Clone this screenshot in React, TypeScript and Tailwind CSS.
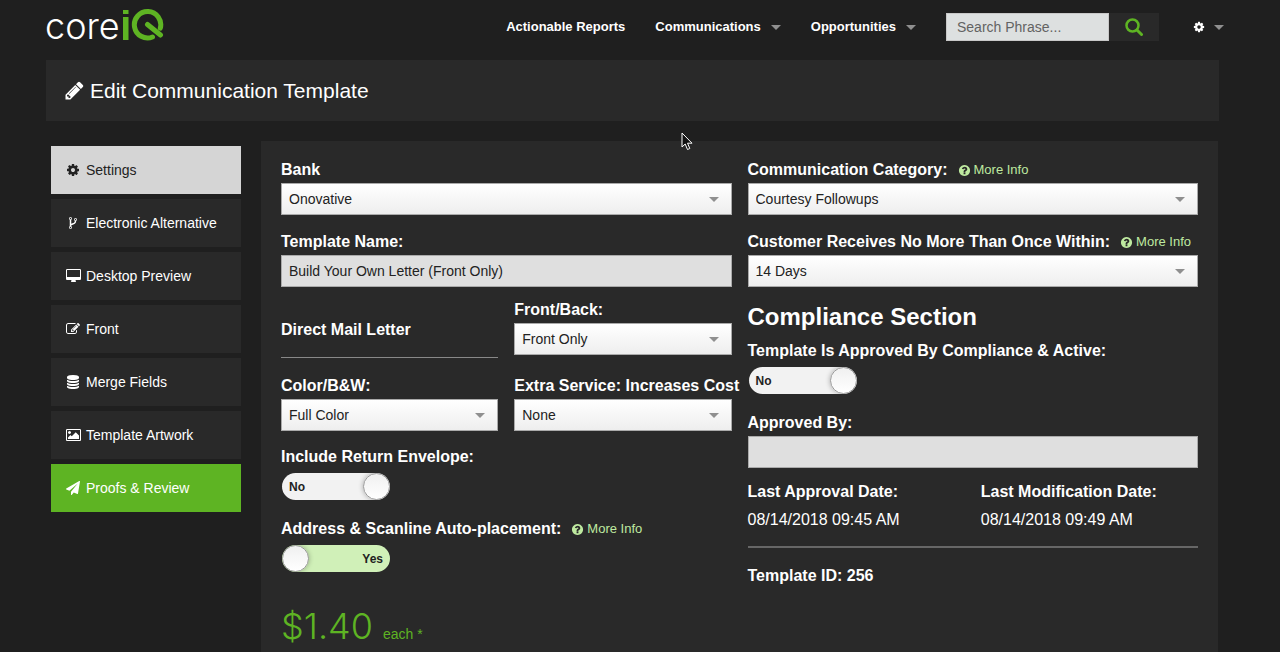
import { useId, useState, type ReactNode } from "react";
import { clsx } from "clsx";

const ICONS = {
  pencil: {
    width: 1792,
    d: "M491 1536l91-91-235-235-91 91v107h128v128h107zm523-928q0-22-22-22-10 0-17 7l-542 542q-7 7-7 17 0 22 22 22 10 0 17-7l542-542q7-7 7-17zm-54-192l416 416-832 832h-416v-416zm683 96q0 53-37 90l-166 166-416-416 166-165q36-38 90-38 53 0 91 38l235 234q37 39 37 91z",
  },
  cog: {
    width: 1792,
    d: "M1152 896q0-106-75-181t-181-75-181 75-75 181 75 181 181 75 181-75 75-181zm512-109v222q0 12-8 23t-20 13l-185 28q-19 54-39 91 35 50 107 138 10 12 10 25t-9 23q-27 37-99 108t-94 71q-12 0-26-9l-138-108q-44 23-91 38-16 136-29 186-7 28-36 28h-222q-14 0-24.5-8.500t-11.500-21.500l-28-184q-49-16-90-37l-141 107q-10 9-25 9-14 0-25-11-126-114-165-168-7-10-7-23 0-12 8-23 15-21 51-66.500t54-70.500q-27-50-41-99l-183-27q-13-2-21-12.500t-8-23.500v-222q0-12 8-23t19-13l186-28q14-46 39-92-40-57-107-138-10-12-10-24 0-10 9-23 26-36 98.500-107.500t94.500-71.500q13 0 26 10l138 107q44-23 91-38 16-136 29-186 7-28 36-28h222q14 0 24.500 8.500t11.500 21.500l28 184q49 16 90 37l142-107q9-9 24-9 13 0 25 10 129 119 165 170 7 8 7 22 0 12-8 23-15 21-51 66.500t-54 70.500q26 50 41 98l183 28q13 2 21 12.500t8 23.500z",
  },
  fork: {
    width: 1792,
    d: "M672 1472q0-40-28-68t-68-28-68 28-28 68 28 68 68 28 68-28 28-68zm0-1152q0-40-28-68t-68-28-68 28-28 68 28 68 68 28 68-28 28-68zm640 128q0-40-28-68t-68-28-68 28-28 68 28 68 68 28 68-28 28-68zm96 0q0 52-26 96.500t-70 69.500q-2 287-226 414-67 38-203 81-128 40-169.500 71t-41.500 100v26q44 25 70 69.500t26 96.500q0 80-56 136t-136 56-136-56-56-136q0-52 26-96.500t70-69.500v-820q-44-25-70-69.500t-26-96.500q0-80 56-136t136-56 136 56 56 136q0 52-26 96.500t-70 69.500v497q54-26 154-57 55-17 87.500-29.500t70.500-31 59-39.500 40.500-51 28-69.500 8.500-91.500q-44-25-70-69.500t-26-96.500q0-80 56-136t136-56 136 56 56 136z",
  },
  desktop: {
    width: 1920,
    d: "M1792 992v-832q0-13-9.500-22.500t-22.500-9.500h-1600q-13 0-22.500 9.500t-9.500 22.500v832q0 13 9.500 22.500t22.500 9.500h1600q13 0 22.500-9.500t9.500-22.500zm128-832v1088q0 66-47 113t-113 47h-544q0 37 16 77.500t32 71 16 43.500q0 26-19 45t-45 19h-512q-26 0-45-19t-19-45q0-14 16-44t32-70 16-78h-544q-66 0-113-47t-47-113v-1088q0-66 47-113t113-47h1600q66 0 113 47t47 113z",
  },
  edit: {
    width: 1792,
    d: "M888 1184l116-116-152-152-116 116v56h96v96h56zm440-720q-16-16-33 1l-350 350q-17 17-1 33t33-1l350-350q17-17 1-33zm80 594v190q0 119-84.500 203.500t-203.500 84.500h-832q-119 0-203.500-84.500t-84.500-203.500v-832q0-119 84.500-203.500t203.500-84.500h832q63 0 117 25 15 7 18 23 3 17-9 29l-49 49q-14 14-32 8-23-6-45-6h-832q-66 0-113 47t-47 113v832q0 66 47 113t113 47h832q66 0 113-47t47-113v-126q0-13 9-22l64-64q15-15 35-7t20 29zm-96-738l288 288-672 672h-288v-288zm444 132l-92 92-288-288 92-92q28-28 68-28t68 28l152 152q28 28 28 68t-28 68z",
  },
  database: {
    width: 1792,
    d: "M896 768q237 0 443-43t325-127v170q0 69-103 128t-280 93.500-385 34.500-385-34.500-280-93.500-103-128v-170q119 84 325 127t443 43zm0 768q237 0 443-43t325-127v170q0 69-103 128t-280 93.500-385 34.500-385-34.500-280-93.500-103-128v-170q119 84 325 127t443 43zm0-384q237 0 443-43t325-127v170q0 69-103 128t-280 93.500-385 34.500-385-34.500-280-93.500-103-128v-170q119 84 325 127t443 43zm0-1152q208 0 385 34.500t280 93.500 103 128v128q0 69-103 128t-280 93.500-385 34.500-385-34.500-280-93.500-103-128v-128q0-69 103-128t280-93.500 385-34.500z",
  },
  image: {
    width: 1920,
    d: "M640 576q0 80-56 136t-136 56-136-56-56-136 56-136 136-56 136 56 56 136zm1024 384v448h-1408v-192l320-320 160 160 512-512zm96-704h-1600q-13 0-22.500 9.500t-9.500 22.500v1216q0 13 9.500 22.500t22.500 9.500h1600q13 0 22.500-9.500t9.500-22.500v-1216q0-13-9.500-22.500t-22.500-9.500zm160 32v1216q0 66-47 113t-113 47h-1600q-66 0-113-47t-47-113v-1216q0-66 47-113t113-47h1600q66 0 113 47t47 113z",
  },
  plane: {
    width: 1792,
    d: "M1764 11q33 24 27 64l-256 1536q-5 29-32 45-14 8-31 8-11 0-24-5l-453-185-242 295q-18 23-49 23-13 0-22-4-19-7-30.500-23.500t-11.500-36.500v-349l864-1059-1069 925-395-162q-37-14-40-55-2-40 32-59l1664-960q15-9 32-9 20 0 36 11z",
  },
  question: {
    width: 1792,
    d: "M1024 1376v-192q0-14-9-23t-23-9h-192q-14 0-23 9t-9 23v192q0 14 9 23t23 9h192q14 0 23-9t9-23zm256-672q0-88-55.500-163t-138.500-116-170-41q-243 0-371 213-15 24 8 42l132 100q7 6 19 6 16 0 25-12 53-68 86-92 34-24 86-24 48 0 85.500 26t37.500 59q0 38-20 61t-68 45q-63 28-115.500 86.500t-52.500 125.500v36q0 14 9 23t23 9h192q14 0 23-9t9-23q0-19 21.500-49.500t54.500-49.500q32-18 49-28.500t46-35 44.500-48 28-60.500 12.500-81zm384 192q0 209-103 385.500t-279.500 279.500-385.500 103-385.500-103-279.500-279.500-103-385.500 103-385.500 279.500-279.500 385.500-103 385.500 103 279.500 279.500 103 385.500z",
  },
};

type IconName = keyof typeof ICONS;

function Icon({ name, className }: { name: IconName; className?: string }) {
  const { width, d } = ICONS[name];
  return (
    <svg viewBox={`0 0 ${width} 1792`} className={clsx("shrink-0 fill-current", className)} aria-hidden="true">
      <path d={d} />
    </svg>
  );
}

function Caret({ className }: { className?: string }) {
  return (
    <svg viewBox="0 0 10 5" className={clsx("h-[5px] w-[10px] shrink-0 fill-[#8f8f8f]", className)} aria-hidden="true">
      <path d="M0 0h10L5 5z" />
    </svg>
  );
}

function Logo() {
  return (
    <a href="#" aria-label="core iQ" className="flex h-11 items-start text-white">
      <span className="w-[73px] font-['Inter',sans-serif] text-4xl leading-[52px] font-light">core</span>
      <svg viewBox="0 0 42 34" className="mt-2 ml-1 h-[34px] w-[42px]" aria-hidden="true">
        <path d="M1 2h5.500v4H1zM1 9h5.500v23H1z" fill="#5eb423" />
        <path
          d="M38.300 20.200A13.200 13.200 0 1 0 30.500 29M25.500 16.500L38.500 27"
          fill="none"
          stroke="#5eb423"
          strokeWidth="5"
          strokeLinecap="round"
        />
      </svg>
    </a>
  );
}

function Header() {
  return (
    <header className="flex h-[60px] items-start justify-between pr-[56px] pl-[45px]">
      <Logo />
      <div className="flex h-[54px] items-center">
        <nav className="flex items-center gap-[30px] text-[13px] font-bold text-white">
          <a href="#">Actionable Reports</a>
          <a href="#" className="flex items-center gap-[10px]">
            Communications
            <Caret />
          </a>
          <a href="#" className="flex items-center gap-[10px]">
            Opportunities
            <Caret />
          </a>
        </nav>
        <form className="ml-[30px] flex h-[28px]" onSubmit={(e) => e.preventDefault()}>
          <input
            type="search"
            aria-label="Search"
            placeholder="Search Phrase..."
            className="w-[163px] border border-[#c8c8c8] bg-[#dde0e0] px-[10px] text-sm text-[#222] placeholder:text-[#636363]"
          />
          <button type="submit" aria-label="Submit search" className="flex w-[50px] items-center justify-center bg-[#292929]">
            <svg viewBox="0 0 18 18" className="size-[18px]" fill="none" stroke="#5eb423" aria-hidden="true">
              <circle cx="7.500" cy="7.500" r="6" strokeWidth="2.500" />
              <path d="M12 12l4.500 4.500" strokeWidth="3" strokeLinecap="round" />
            </svg>
          </button>
        </form>
        <button type="button" aria-label="Preferences" className="ml-[34px] flex items-center gap-[9px] text-white">
          <Icon name="cog" className="size-3" />
          <Caret />
        </button>
      </div>
    </header>
  );
}

const TABS: { icon: IconName; label: string }[] = [
  { icon: "cog", label: "Settings" },
  { icon: "fork", label: "Electronic Alternative" },
  { icon: "desktop", label: "Desktop Preview" },
  { icon: "edit", label: "Front" },
  { icon: "database", label: "Merge Fields" },
  { icon: "image", label: "Template Artwork" },
  { icon: "plane", label: "Proofs & Review" },
];

function Sidebar() {
  return (
    <nav className="flex w-[190px] shrink-0 flex-col gap-[5px] pt-[5px]">
      {TABS.map((tab, i) => (
        <a
          key={tab.label}
          href="#"
          aria-current={i === 0 ? "page" : undefined}
          className={clsx(
            "flex h-[48px] items-center gap-[5px] pl-[14px] text-sm",
            i === 0 && "bg-[#d5d5d5] text-[#222]",
            i > 0 && i < TABS.length - 1 && "bg-[#292929] text-white",
            i === TABS.length - 1 && "bg-[#5eb423] text-white"
          )}
        >
          <span className="flex w-4 justify-center">
            <Icon name={tab.icon} className="h-[14px]" />
          </span>
          {tab.label}
        </a>
      ))}
    </nav>
  );
}

function MoreInfo() {
  return (
    <a href="#" className="ml-[10px] flex items-center gap-[3px] text-[13px] whitespace-nowrap text-[#bfeaa0]">
      <Icon name="question" className="size-[13px]" />
      More Info
    </a>
  );
}

interface FieldProps {
  label: string;
  info?: boolean;
  className?: string;
  children: (id: string) => ReactNode;
}

function Field({ label, info, className, children }: FieldProps) {
  const id = useId();
  return (
    <div className={className}>
      <div className="flex h-[26px] items-center">
        <label htmlFor={id} className="text-base font-bold whitespace-nowrap">
          {label}
        </label>
        {info && <MoreInfo />}
      </div>
      {children(id)}
    </div>
  );
}

function SelectField({ value, ...field }: { value: string } & Omit<FieldProps, "children">) {
  return (
    <Field {...field}>
      {(id) => (
        <div className="relative">
          <select
            id={id}
            className="h-8 w-full appearance-none border border-[#aaa] bg-linear-to-b from-white to-[#eee] pr-8 pl-[7px] text-sm text-[#222]"
          >
            <option>{value}</option>
          </select>
          <Caret className="pointer-events-none absolute top-[14px] right-[13px]" />
        </div>
      )}
    </Field>
  );
}

function TextField({ value, ...field }: { value: string } & Omit<FieldProps, "children">) {
  return (
    <Field {...field}>
      {(id) => (
        <input
          id={id}
          type="text"
          defaultValue={value}
          className="block h-8 w-full border border-[#aaa] bg-[#dfdfdf] px-[7px] text-sm text-[#222]"
        />
      )}
    </Field>
  );
}

function ToggleField({ on, ...field }: { on: boolean } & Omit<FieldProps, "children">) {
  const [checked, setChecked] = useState(on);
  return (
    <Field {...field}>
      {(id) => (
        <div className="pt-[3px] pl-px">
          <input
            id={id}
            type="checkbox"
            role="switch"
            className="peer sr-only"
            checked={checked}
            onChange={(e) => setChecked(e.target.checked)}
          />
          <label
            htmlFor={id}
            className={clsx(
              "flex h-[27px] w-[108px] items-center justify-between overflow-hidden rounded-full text-xs font-bold text-[#222] peer-focus-visible:outline-2",
              checked ? "flex-row-reverse bg-[#d0f0b8] pr-[7px]" : "bg-[#f2f2f2] pl-[7px]"
            )}
          >
            {checked ? "Yes" : "No"}
            <span className="size-[27px] rounded-full border border-[#999] bg-linear-to-b from-[#f0f0f0] to-white shadow-[0_0_5px_rgba(0,0,0,0.3)]" />
          </label>
        </div>
      )}
    </Field>
  );
}

function DateStamp({ label, value }: { label: string; value: string }) {
  return (
    <div className="leading-7">
      <dt className="font-bold">{label}</dt>
      <dd>{value}</dd>
    </div>
  );
}

function Pointer() {
  return (
    <svg viewBox="0 0 12 19" className="pointer-events-none absolute top-[132px] left-[681px] h-[19px] w-[12px]" aria-hidden="true">
      <path d="M1 1v14l3.200-3 2.300 5.500 2.300-1-2.300-5.300H11z" fill="#111" stroke="#fff" strokeWidth="1" />
    </svg>
  );
}

export default function App() {
  return (
    <div className="relative flex min-h-screen flex-col bg-[#1f1f1f] font-['Liberation_Sans',Arial,sans-serif] text-white">
      <Header />
      <div className="flex flex-1 flex-col pr-[61px] pl-[46px]">
        <h1 className="flex h-[61px] items-center gap-[5px] bg-[#292929] pl-[18px] text-[21px]">
          <Icon name="pencil" className="size-[21px]" />
          Edit Communication Template
        </h1>
        <div className="mt-5 flex flex-1 gap-5 pr-px pl-[5px]">
          <Sidebar />
          <main className="grid flex-1 grid-cols-2 gap-4 bg-[#292929] px-5 pt-4">
            <section>
              <SelectField label="Bank" value="Onovative" />
              <TextField label="Template Name:" value="Build Your Own Letter (Front Only)" className="mt-[14px]" />
              <div className="mt-[10px] grid grid-cols-2 gap-4">
                <h2 className="flex h-[61px] items-center border-b border-[#888] pt-[6px] text-base font-bold">
                  Direct Mail Letter
                </h2>
                <SelectField label="Front/Back:" value="Front Only" />
              </div>
              <div className="mt-[15px] grid grid-cols-2 gap-4">
                <SelectField label="Color/B&W:" value="Full Color" />
                <SelectField label="Extra Service: Increases Cost" value="None" />
              </div>
              <ToggleField label="Include Return Envelope:" on={false} className="mt-[13px]" />
              <ToggleField label="Address & Scanline Auto-placement:" info on className="mt-4" />
              <p className="mt-[30px] text-[#5eb423]">
                <span className="mr-[10px] font-['Inter',sans-serif] text-4xl leading-[48px] font-light">$1.40</span>
                <span className="text-sm">each *</span>
              </p>
            </section>
            <section>
              <SelectField label="Communication Category:" info value="Courtesy Followups" />
              <SelectField label="Customer Receives No More Than Once Within:" info value="14 Days" className="mt-[14px]" />
              <h2 className="mt-[15px] mb-[6px] text-2xl leading-[30px] font-bold">Compliance Section</h2>
              <ToggleField label="Template Is Approved By Compliance & Active:" on={false} />
              <TextField label="Approved By:" value="" className="mt-4" />
              <dl className="mt-[10px] grid grid-cols-2 gap-4">
                <DateStamp label="Last Approval Date:" value="08/14/2018 09:45 AM" />
                <DateStamp label="Last Modification Date:" value="08/14/2018 09:49 AM" />
              </dl>
              <hr className="mt-3 border-t-2 border-[#666]" />
              <p className="mt-[14px] leading-7 font-bold">Template ID: 256</p>
            </section>
          </main>
        </div>
      </div>
      <Pointer />
    </div>
  );
}
